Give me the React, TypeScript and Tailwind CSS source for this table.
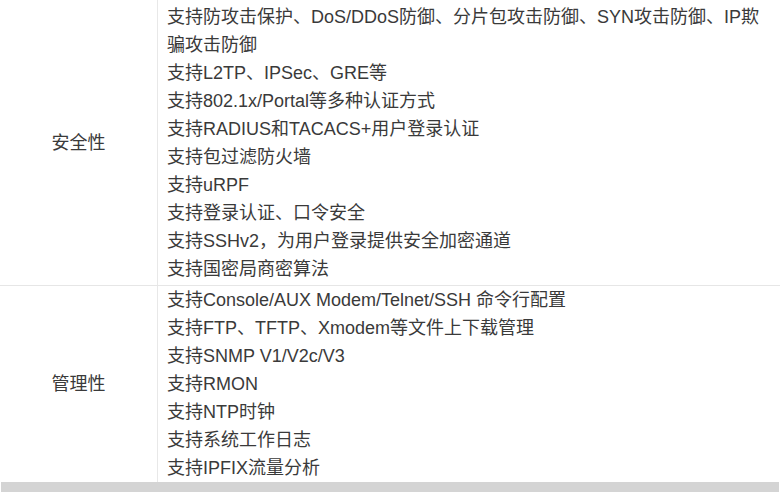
import React from "react";

const sec = [
  "支持防攻击保护、DoS/DDoS防御、分片包攻击防御、SYN攻击防御、IP欺骗攻击防御",
  "支持L2TP、IPSec、GRE等",
  "支持802.1x/Portal等多种认证方式",
  "支持RADIUS和TACACS+用户登录认证",
  "支持包过滤防火墙",
  "支持uRPF",
  "支持登录认证、口令安全",
  "支持SSHv2，为用户登录提供安全加密通道",
  "支持国密局商密算法",
];

const mgmt = [
  "支持Console/AUX Modem/Telnet/SSH 命令行配置",
  "支持FTP、TFTP、Xmodem等文件上下载管理",
  "支持SNMP V1/V2c/V3",
  "支持RMON",
  "支持NTP时钟",
  "支持系统工作日志",
  "支持IPFIX流量分析",
];

export default function App() {
  return (
    <div
      className="w-[781px] h-[492px] bg-white overflow-hidden text-[18px] leading-[28px] text-[#3a3a3a]"
      style={{ fontFamily: '"Liberation Sans", "Noto Sans CJK SC", sans-serif' }}
    >
      <div className="grid grid-cols-[157px_1fr] w-[780px] border-b border-[#e6e6e6]">
        <div className="flex items-center justify-center">安全性</div>
        <div className="border-l border-[#e8e8e8] pl-[9px] pr-[12px] pt-[3px] pb-[2px]">
          {sec.map((t) => (
            <div key={t}>{t}</div>
          ))}
        </div>
      </div>
      <div className="grid grid-cols-[157px_1fr] w-[780px]">
        <div className="flex items-center justify-center">管理性</div>
        <div className="border-l border-[#e8e8e8] pl-[9px] pr-[12px]">
          {mgmt.map((t) => (
            <div key={t}>{t}</div>
          ))}
        </div>
      </div>
      <div className="ml-px w-[778px] h-[10px] bg-[#d4d4d4]" />
    </div>
  );
}
